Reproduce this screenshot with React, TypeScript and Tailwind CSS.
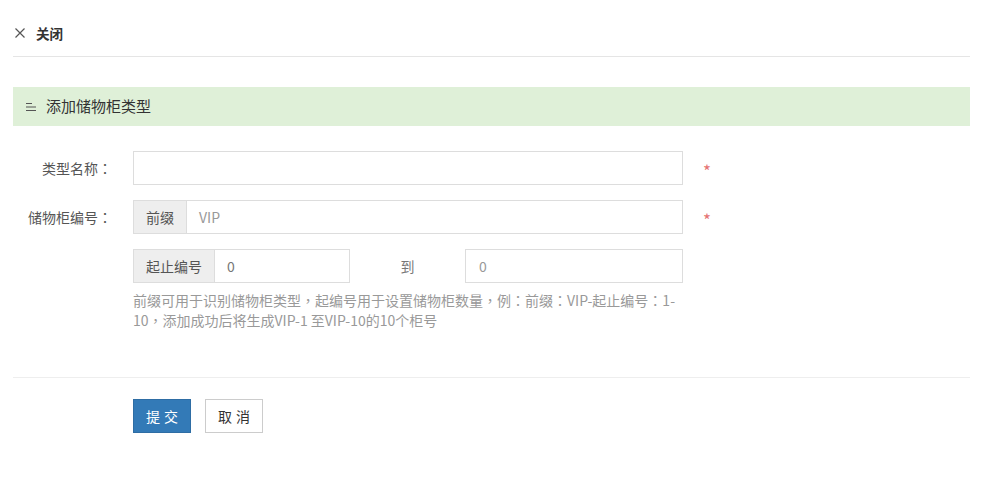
import React from "react";

const P = ({ children }: { children: React.ReactNode }) => (
  <span style={{ fontFamily: '"Noto Sans CJK TC", "Noto Sans CJK SC", sans-serif' }}>{children}</span>
);

export default function App() {
  return (
    <div
      className="w-[983px] h-[486px] bg-white px-[13px] text-[14px] text-[#333]"
      style={{ fontFamily: '"Noto Sans CJK SC", "Noto Sans", sans-serif' }}
    >
      {/* header */}
      <div className="h-[57px] border-b border-[#e5e5e5] pt-[23px]">
        <div className="flex items-center h-[20px] leading-[20px]">
          <svg width="10" height="10" viewBox="0 0 10 10" className="ml-[2px] mr-[11px]">
            <path d="M0.5 0.5 L9.5 9.5 M9.5 0.5 L0.5 9.5" stroke="#555" strokeWidth="1.2" />
          </svg>
          <span className="font-bold text-[13.5px] text-[#333]">关闭</span>
        </div>
      </div>

      {/* title bar */}
      <div className="mt-[30px] h-[39px] bg-[#dff0d8] flex items-center">
        <svg width="12" height="10" viewBox="0 0 12 10" className="ml-[12px] mr-[9px]">
          <path d="M1 1.5 H7 M1 5 H11 M1 8.5 H11" stroke="#555" strokeWidth="1" />
        </svg>
        <span className="text-[15px] text-[#333]">添加储物柜类型</span>
      </div>

      {/* form */}
      <div className="mt-[25px]">
        <div className="flex items-center h-[34px]">
          <div className="w-[99px] text-right text-[#555]">
            类型名称<P>：</P>
          </div>
          <div className="ml-[21px] w-[550px] h-[34px] border border-[#ddd]"></div>
          <div className="ml-[20px] text-[#e57373] text-[17px] leading-none mt-[4px]">*</div>
        </div>

        <div className="flex items-center h-[34px] mt-[15px]">
          <div className="w-[99px] text-right text-[#555]">
            储物柜编号<P>：</P>
          </div>
          <div className="ml-[21px] w-[550px] h-[34px] border border-[#ddd] flex">
            <div className="w-[53px] bg-[#eee] border-r border-[#ddd] flex items-center justify-center text-[#555]">
              前缀
            </div>
            <div className="flex items-center pl-[12px] text-[#999]">VIP</div>
          </div>
          <div className="ml-[20px] text-[#e57373] text-[17px] leading-none mt-[4px]">*</div>
        </div>

        <div className="flex items-center h-[34px] mt-[15px]">
          <div className="w-[99px]"></div>
          <div className="ml-[21px] w-[217px] h-[34px] border border-[#ddd] flex">
            <div className="w-[81px] bg-[#eee] border-r border-[#ddd] flex items-center justify-center text-[#555]">
              起止编号
            </div>
            <div className="flex items-center pl-[12px] text-[#777]">0</div>
          </div>
          <div className="w-[115px] text-center text-[#777]">到</div>
          <div className="w-[218px] h-[34px] border border-[#ddd] flex items-center pl-[13px] text-[#999]">
            0
          </div>
        </div>

        <div className="flex mt-[7px]">
          <div className="w-[99px]"></div>
          <div className="ml-[21px] w-[552px] leading-[20px] text-[#999]">
            前缀可用于识别储物柜类型<P>，</P>起编号用于设置储物柜数量<P>，</P>例<P>：</P>前缀<P>：</P>VIP-起止编号<P>：</P>1-10<P>，</P>添加成功后将生成VIP-1 至VIP-10的10个柜号
          </div>
        </div>
      </div>

      <div className="mt-[47px] border-t border-[#eee]"></div>

      <div className="flex mt-[21px]">
        <div className="w-[120px]"></div>
        <button className="w-[58px] h-[34px] bg-[#337ab7] border border-[#2e6da4] text-white text-[14px] tracking-[4px] pl-[4px]">
          提交
        </button>
        <button className="ml-[14px] w-[58px] h-[34px] bg-white border border-[#ccc] text-[#333] text-[14px] tracking-[4px] pl-[4px]">
          取消
        </button>
      </div>
    </div>
  );
}
